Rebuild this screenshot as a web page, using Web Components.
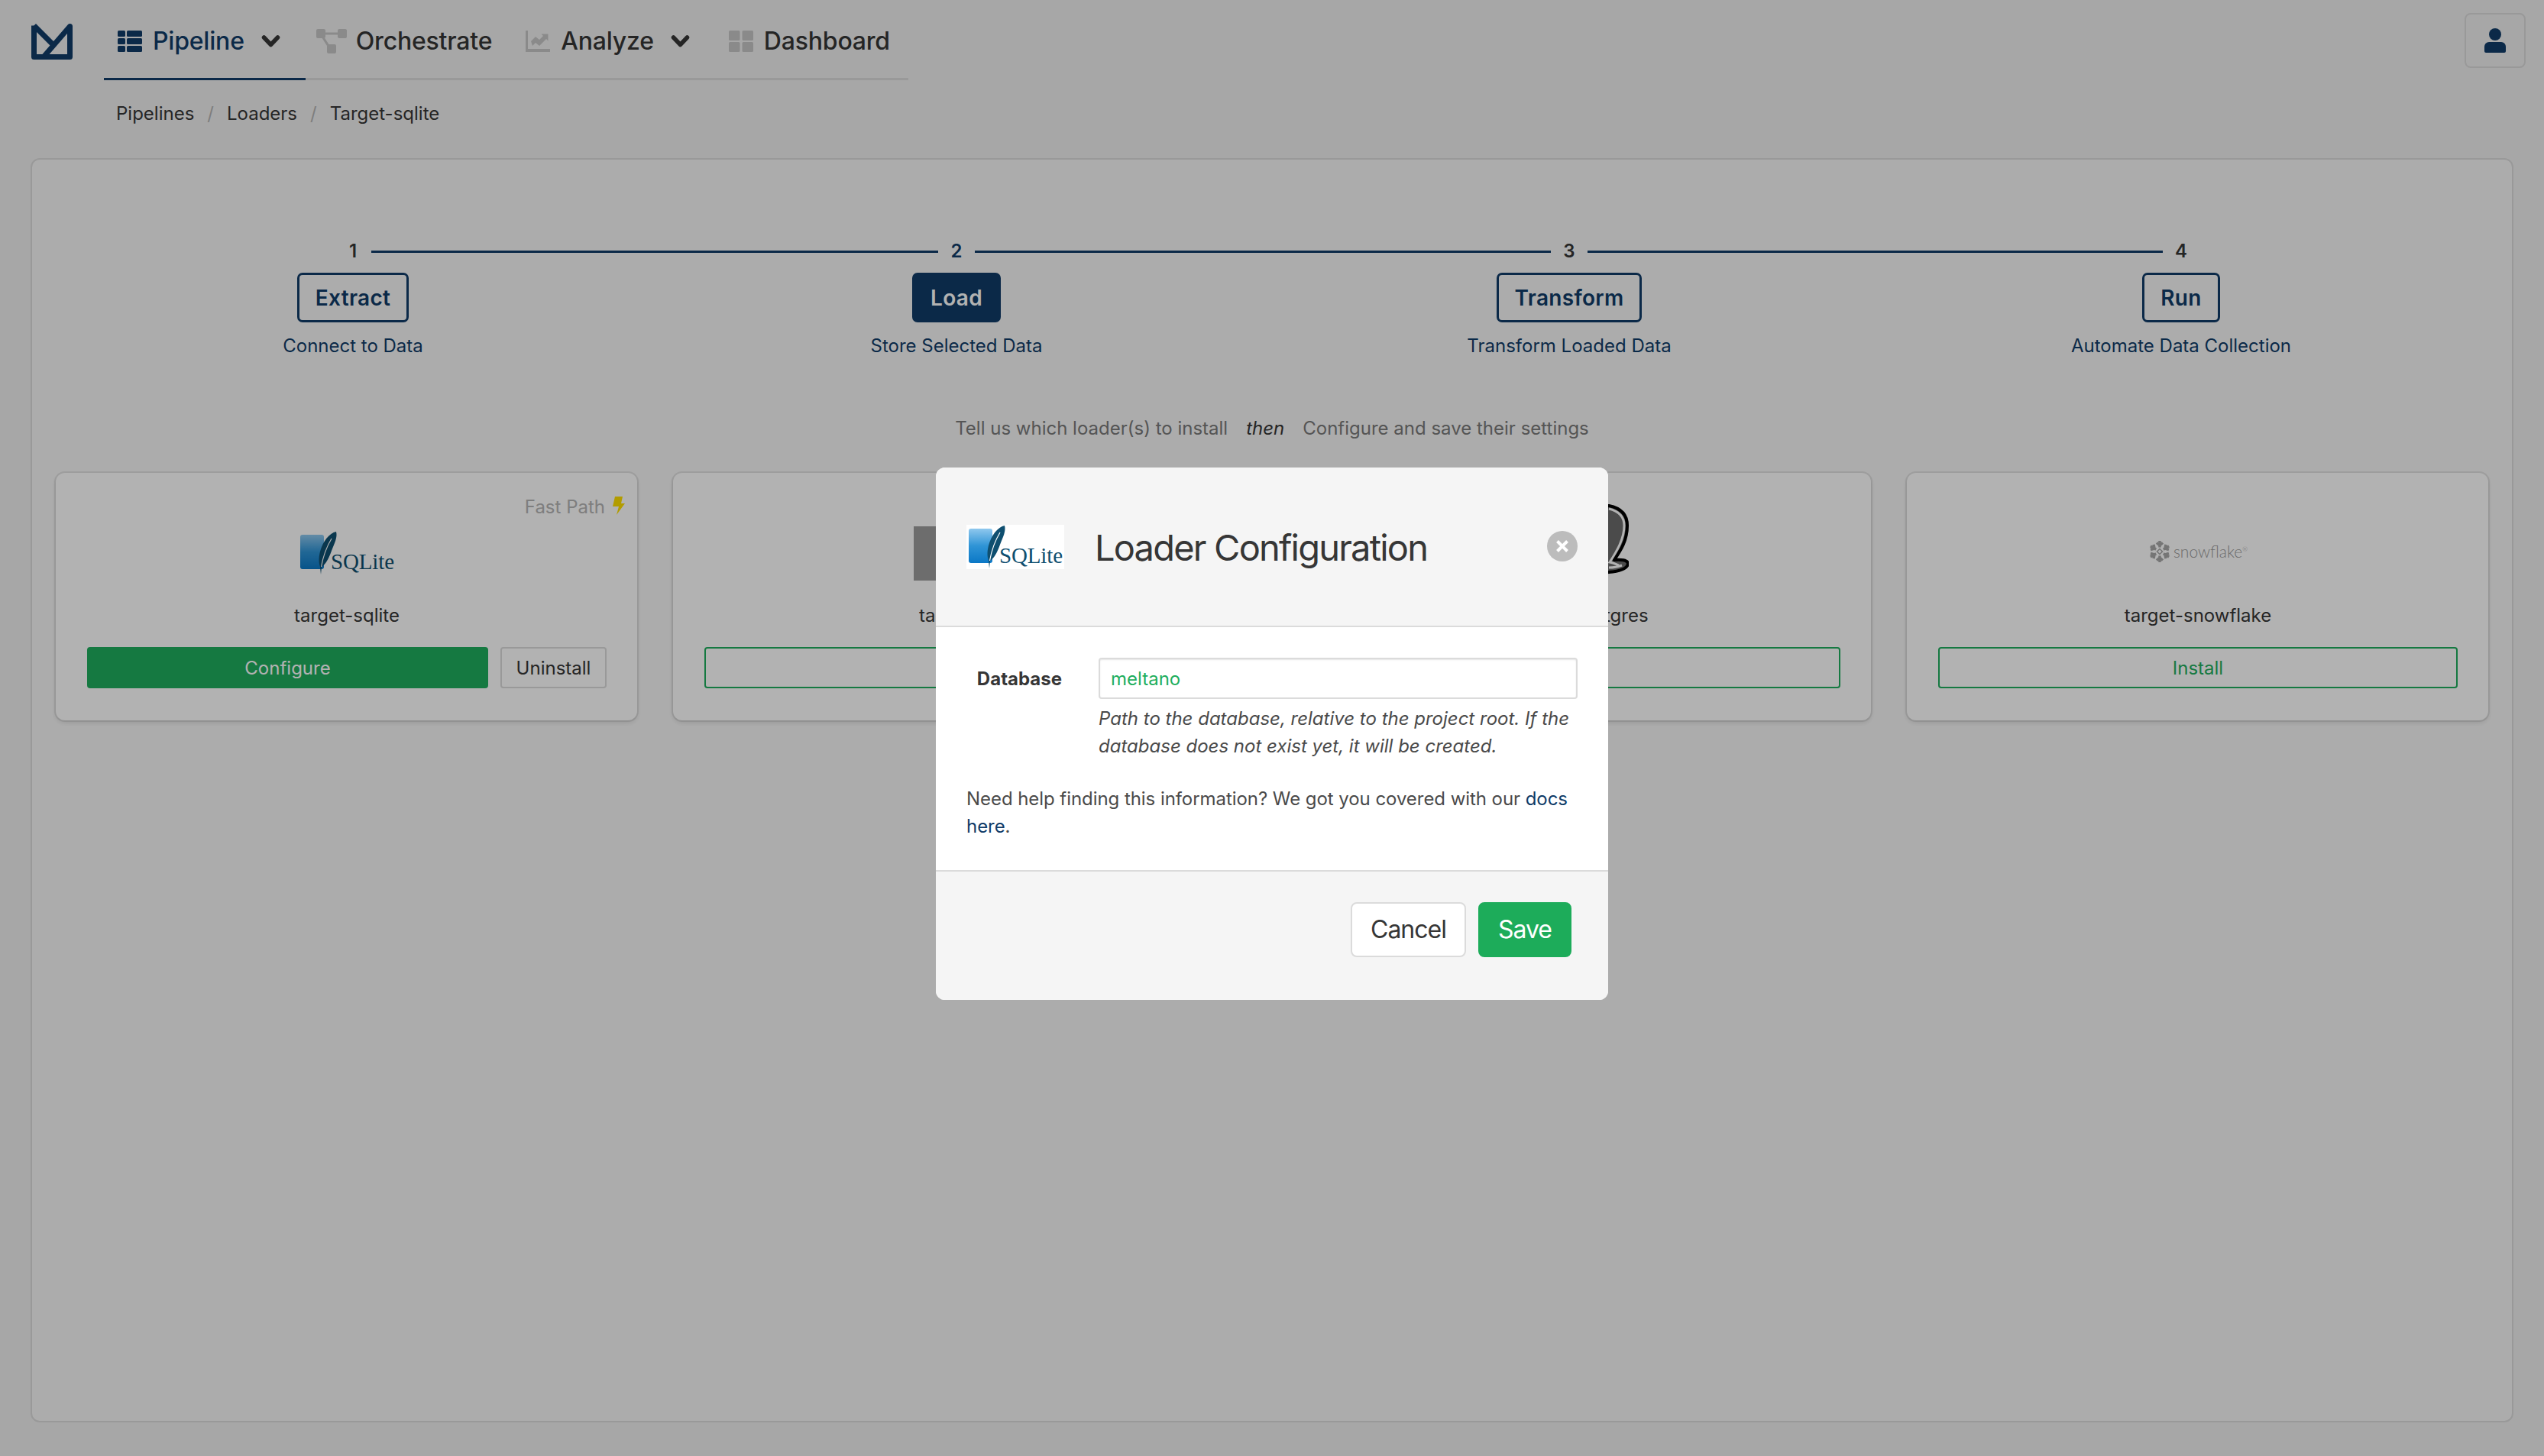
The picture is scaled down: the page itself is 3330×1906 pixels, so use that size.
<!DOCTYPE html>
<html lang="en">
<head>
<meta charset="utf-8">
<title>Loader Configuration</title>
<style>
  html, body { margin: 0; height: 100%; }
  body {
    background: #f0f0f0;
    color: #363636;
    font-family: Inter, "Liberation Sans", sans-serif;
    font-size: 24px;
    line-height: 36px;
  }
</style>
</head>
<body>
<app-nav>
  <nav-tab active pl="18" pr="33" label="Pipeline" caret>
    <svg viewBox="0 0 32 28" width="32" height="28" fill="currentColor"><rect width="10" height="8" rx="1.5"/><rect x="12" width="20" height="8" rx="1.5"/><rect y="10" width="10" height="8" rx="1.5"/><rect x="12" y="10" width="20" height="8" rx="1.5"/><rect y="20" width="10" height="8" rx="1.5"/><rect x="12" y="20" width="20" height="8" rx="1.5"/></svg>
  </nav-tab>
  <nav-tab pl="14" pr="23" label="Orchestrate" tight>
    <svg viewBox="0 0 40 32" width="40" height="32" fill="currentColor"><rect width="12" height="12" rx="2"/><rect x="28" width="12" height="12" rx="2"/><rect x="14" y="20" width="12" height="12" rx="2"/><path d="M11 4.5h18v3H11zM7 11l3-1 7 11-3 1z"/></svg>
  </nav-tab>
  <nav-tab pl="21" pr="25" label="Analyze" caret>
    <svg viewBox="0 0 32 28" width="32" height="28" fill="currentColor"><path d="M0 0h3v24h29v4H0z"/><path d="M7 15l6-6 5 4 5-5-2.500-2.500h9v9L27 12l-9 9-5-4-4 4z" transform="translate(0 -1)"/></svg>
  </nav-tab>
  <nav-tab pl="26" pr="24" label="Dashboard">
    <svg viewBox="0 0 32 28" width="32" height="28" fill="currentColor"><rect width="14.500" height="13" rx="1.500"/><rect x="17.500" width="14.500" height="13" rx="1.500"/><rect y="15" width="14.500" height="13" rx="1.500"/><rect x="17.500" y="15" width="14.500" height="13" rx="1.500"/></svg>
  </nav-tab>
</app-nav>

<bread-crumbs>
  <span>Pipelines</span>
  <span>Loaders</span>
  <span>Target-sqlite</span>
</bread-crumbs>

<main-panel>
  <step-bar>
    <step-item num="1" name="Extract" first>Connect to Data</step-item>
    <step-item num="2" name="Load" active>Store Selected Data</step-item>
    <step-item num="3" name="Transform">Transform Loaded Data</step-item>
    <step-item num="4" name="Run" last>Automate Data Collection</step-item>
  </step-bar>
  <step-hint></step-hint>
  <card-grid>
    <plugin-card name="target-sqlite" installed fast><sqlite-logo></sqlite-logo></plugin-card>
    <plugin-card name="target-csv"><csv-logo></csv-logo></plugin-card>
    <plugin-card name="target-postgres"><postgres-logo></postgres-logo></plugin-card>
    <plugin-card name="target-snowflake"><snowflake-logo></snowflake-logo></plugin-card>
  </card-grid>
</main-panel>

<config-modal></config-modal>

<script>
class AppNav extends HTMLElement {
  constructor() {
    super();
    this.attachShadow({ mode: "open" });
    this.shadowRoot.innerHTML = `
      <style>
        :host { display: flex; height: 105px; padding-left: 41px; position: relative; }
        .logo { width: 54px; height: 48px; margin-top: 30px; margin-right: 41px; flex: none; }
        .tabs { display: flex; height: 105px; box-sizing: border-box; border-bottom: 3px solid #dbdbdb; }
        button {
          position: absolute; top: 17px; right: 24px; width: 80px; height: 72px;
          box-sizing: border-box; background: #f0f0f0; border: 2px solid #dbdbdb; border-radius: 8px;
          display: flex; align-items: center; justify-content: center; padding: 0; color: #103c68;
        }
      </style>
      <svg class="logo" viewBox="0 0 54 48" fill="none" stroke="#103c68" stroke-width="7" stroke-linejoin="round">
        <path d="M3.500 3.500 V44.500 H50.500 V4.500 L16 44.500"/>
        <path d="M3.500 3.500 L29 29"/>
      </svg>
      <div class="tabs"><slot></slot></div>
      <button aria-label="Account">
        <svg viewBox="0 0 28 32" width="28" height="32" fill="currentColor"><circle cx="14" cy="8" r="8"/><path d="M6 18h16a6 6 0 0 1 6 6v6a2 2 0 0 1-2 2H2a2 2 0 0 1-2-2v-6a6 6 0 0 1 6-6z"/></svg>
      </button>
    `;
  }
}
customElements.define("app-nav", AppNav);

class NavTab extends HTMLElement {
  constructor() {
    super();
    this.attachShadow({ mode: "open" });
  }

  connectedCallback() {
    const active = this.hasAttribute("active");
    const caret = this.hasAttribute("caret");
    this.shadowRoot.innerHTML = `
      <style>
        :host {
          display: flex; align-items: center; box-sizing: border-box; height: 105px;
          margin-bottom: -3px; padding: 5px ${this.getAttribute("pr")}px 0 ${this.getAttribute("pl")}px;
          border-bottom: 3px solid ${active ? "#103c68" : "transparent"};
          font-size: 32px; font-weight: 500; letter-spacing: -.2px; color: ${active ? "#103c68" : "#363636"};
        }
        .icon { display: flex; margin-right: ${this.hasAttribute("tight") ? 12 : 14}px; color: ${active ? "#103c68" : "#c6c6c6"}; }
        .caret { margin-left: 22px; }
      </style>
      <span class="icon"><slot></slot></span>
      <span>${this.getAttribute("label")}</span>
      ${caret ? `<svg class="caret" viewBox="0 0 25 18" width="25" height="18" fill="none" stroke="#363636" stroke-width="5.500" stroke-linecap="round" stroke-linejoin="round"><path d="M3.500 4l9 9.500 9-9.500"/></svg>` : ""}
    `;
  }
}
customElements.define("nav-tab", NavTab);

class BreadCrumbs extends HTMLElement {
  constructor() {
    super();
    this.attachShadow({ mode: "open" });
    this.shadowRoot.innerHTML = `
      <style>
        :host { display: block; padding: 26px 0 40px 152px; height: 36px; font-size: 24px; line-height: 36px; color: #363636; }
        .row { display: flex; }
        ::slotted(span:not(:last-child))::after { content: "/"; color: #b5b5b5; margin: 0 17px; }
      </style>
      <div class="row"><slot></slot></div>
    `;
  }
}
customElements.define("bread-crumbs", BreadCrumbs);

class MainPanel extends HTMLElement {
  constructor() {
    super();
    this.attachShadow({ mode: "open" });
    this.shadowRoot.innerHTML = `
      <style>
        :host {
          display: block; box-sizing: border-box; margin: 0 40px; height: 1655px;
          padding: 102px 31px 0; background: #f7f7f7; border: 2px solid #dbdbdb; border-radius: 12px;
        }
      </style>
      <slot></slot>
    `;
  }
}
customElements.define("main-panel", MainPanel);

class StepBar extends HTMLElement {
  constructor() {
    super();
    this.attachShadow({ mode: "open" });
    this.shadowRoot.innerHTML = `
      <style>
        :host { display: grid; grid-template-columns: 778px 802px 802px 800px; }
      </style>
      <slot></slot>
    `;
  }
}
customElements.define("step-bar", StepBar);

class StepItem extends HTMLElement {
  constructor() {
    super();
    this.attachShadow({ mode: "open" });
  }

  connectedCallback() {
    const active = this.hasAttribute("active");
    this.shadowRoot.innerHTML = `
      <style>
        :host { display: flex; flex-direction: column; align-items: center; font-size: 24px; line-height: 36px; color: #103c68; }
        .top { display: flex; align-items: center; align-self: stretch; height: 36px; }
        .line { flex: 1; height: 3px; background: #103c68; }
        .line.off { background: transparent; }
        .num { width: 48px; text-align: center; font-weight: 600; color: ${active ? "#103c68" : "#363636"}; }
        .btn {
          box-sizing: border-box; height: 65px; margin-top: 10px; padding: 0 21px;
          display: flex; align-items: center;
          border: 3px solid #103c68; border-radius: 7px; font-size: 28px; font-weight: 600; letter-spacing: .3px;
          background: ${active ? "#103c68" : "transparent"}; color: ${active ? "#fff" : "#103c68"};
        }
        .sub { margin-top: 13px; }
      </style>
      <div class="top">
        <span class="line ${this.hasAttribute("first") ? "off" : ""}"></span>
        <span class="num">${this.getAttribute("num")}</span>
        <span class="line ${this.hasAttribute("last") ? "off" : ""}"></span>
      </div>
      <div class="btn">${this.getAttribute("name")}</div>
      <div class="sub"><slot></slot></div>
    `;
  }
}
customElements.define("step-item", StepItem);

class StepHint extends HTMLElement {
  constructor() {
    super();
    this.attachShadow({ mode: "open" });
    this.shadowRoot.innerHTML = `
      <style>
        :host { display: flex; justify-content: center; gap: 24px; margin-top: 72px; font-size: 24px; line-height: 36px; color: #7a7a7a; }
        em { color: #363636; }
      </style>
      <span>Tell us which loader(s) to install</span>
      <em>then</em>
      <span>Configure and save their settings</span>
    `;
  }
}
customElements.define("step-hint", StepHint);

class CardGrid extends HTMLElement {
  constructor() {
    super();
    this.attachShadow({ mode: "open" });
    this.shadowRoot.innerHTML = `
      <style>
        :host { display: grid; grid-template-columns: repeat(4, 1fr); gap: 46.670px; margin-top: 40px; }
      </style>
      <slot></slot>
    `;
  }
}
customElements.define("card-grid", CardGrid);

class PluginCard extends HTMLElement {
  constructor() {
    super();
    this.attachShadow({ mode: "open" });
  }

  connectedCallback() {
    const installed = this.hasAttribute("installed");
    this.shadowRoot.innerHTML = `
      <style>
        :host {
          display: flex; flex-direction: column; box-sizing: border-box; height: 324px; padding: 41px 40px 41px 41px;
          position: relative; background: #fff; border-radius: 12px;
          box-shadow: 0 3px 6px rgba(10,10,10,.12), 0 0 0 2px rgba(10,10,10,.08);
          font-size: 24px; line-height: 36px;
        }
        .fast { position: absolute; top: 27px; right: 16px; display: flex; align-items: center; gap: 10px; color: #b5b5b5; }
        .fast svg { margin-top: -4px; }
        .logo { height: 128px; display: flex; align-items: center; justify-content: center; }
        .name { text-align: center; margin-bottom: 23px; }
        .actions { display: flex; gap: 16px; }
        .btn {
          box-sizing: border-box; height: 54px; padding-top: 2px; display: flex; align-items: center; justify-content: center;
          border-radius: 4px; border: 2px solid #1fae5e; color: #1fae5e; flex: 1;
        }
        .btn.fill { background: #1fae5e; color: #fff; }
        .btn.plain { flex: none; width: 139px; border-color: #dbdbdb; color: #363636; }
      </style>
      ${this.hasAttribute("fast") ? `<div class="fast">Fast Path <svg viewBox="0 0 16 24" width="16" height="24" fill="#ffe000"><path d="M3 0h10l-2 9h5L5 24l3-11H0z"/></svg></div>` : ""}
      <div class="logo"><slot></slot></div>
      <div class="name">${this.getAttribute("name")}</div>
      <div class="actions">
        ${installed
          ? `<div class="btn fill">Configure</div><div class="btn plain">Uninstall</div>`
          : `<div class="btn">Install</div>`}
      </div>
    `;
  }
}
customElements.define("plugin-card", PluginCard);

class SqliteLogo extends HTMLElement {
  constructor() {
    super();
    this.attachShadow({ mode: "open" });
    this.shadowRoot.innerHTML = `
      <style>
        :host { display: block; width: 128px; height: 58px; line-height: 0; }
        :host([boxed]) { background: #fff; }
        text { font-family: "Liberation Serif", serif; font-size: 29px; fill: #0f4f70; }
      </style>
      <svg viewBox="0 0 128 58" width="128" height="58">
        <defs>
          <linearGradient id="blue" x1="0" y1="0" x2="0" y2="1">
            <stop offset="0" stop-color="#8fc8ee"/>
            <stop offset=".5" stop-color="#2f94d6"/>
            <stop offset="1" stop-color="#0b78c6"/>
          </linearGradient>
        </defs>
        <rect x="3" y="5" width="31" height="45" rx="3" fill="url(#blue)"/>
        <path d="M50 1C41 3 33 13 29 27c-2 8-2 14 0 20l1 10 1-10c5-3 9-10 13-21C48 16 52 8 50 1z" fill="#0f4f70"/>
        <path d="M44 10C38 20 33 33 30.500 47" fill="none" stroke="#fff" stroke-width="1.200"/>
        <text x="43" y="50" textLength="83">SQLite</text>
      </svg>
    `;
  }
}
customElements.define("sqlite-logo", SqliteLogo);

class CsvLogo extends HTMLElement {
  constructor() {
    super();
    this.attachShadow({ mode: "open" });
    this.shadowRoot.innerHTML = `
      <style>
        :host { display: block; width: 132px; height: 71px; background: #9d9d9d; }
      </style>
    `;
  }
}
customElements.define("csv-logo", CsvLogo);

class PostgresLogo extends HTMLElement {
  constructor() {
    super();
    this.attachShadow({ mode: "open" });
    this.shadowRoot.innerHTML = `
      <style>
        :host { display: block; width: 126px; height: 128px; line-height: 0; }
      </style>
      <svg viewBox="0 0 126 128" width="126" height="128">
        <path d="M100 2C115 5 124 13 124 28c0 20-9 33-17 45 8-1 18 0 18 5-1 7-14 10-25 11-12 1-70 8-85-30C5 30 25 2 100 2z"
          fill="#6c6c6c" stroke="#000" stroke-width="4" stroke-linejoin="round"/>
        <path d="M100 6c12 3 20 10 20 22 0 18-10 34-19 48 6 1 9 3 12 4M100 83c6 0 12-1 17-3"
          fill="none" stroke="#fff" stroke-width="3"/>
      </svg>
    `;
  }
}
customElements.define("postgres-logo", PostgresLogo);

class SnowflakeLogo extends HTMLElement {
  constructor() {
    super();
    this.attachShadow({ mode: "open" });
    const arm = [0, 60, 120, 180, 240, 300]
      .map((a) => `<path transform="rotate(${a} 15 15)" d="M15 9.500V1M15 7l-4-3.500M15 7l4-3.500"/>`)
      .join("");
    this.shadowRoot.innerHTML = `
      <style>
        :host { display: flex; align-items: center; gap: 3px; margin-top: -4px; color: #9a9a9a; font-family: Lato, Inter, sans-serif; font-size: 21px; font-weight: 300; line-height: 30px; }
        sup { font-size: 8px; line-height: 0; vertical-align: 8px; }
      </style>
      <svg viewBox="0 0 30 30" width="30" height="30" fill="none" stroke="#a8a8a8" stroke-width="3.500">${arm}<rect x="12.500" y="12.500" width="5" height="5" transform="rotate(45 15 15)" stroke-width="1.500"/></svg>
      <span>snowflake<sup>®</sup></span>
    `;
  }
}
customElements.define("snowflake-logo", SnowflakeLogo);

class ConfigModal extends HTMLElement {
  constructor() {
    super();
    this.attachShadow({ mode: "open" });
    this.shadowRoot.innerHTML = `
      <style>
        :host {
          position: fixed; inset: 0; display: flex; justify-content: center; align-items: flex-start;
          background: rgba(0,0,0,.3); font-size: 24px; line-height: 36px; color: #4a4a4a;
        }
        .card { width: 880px; margin-top: 612px; border-radius: 12px; overflow: hidden; background: #fff; }
        header {
          display: flex; align-items: center; box-sizing: border-box; height: 209px; padding: 0 40px;
          background: #f5f5f5; border-bottom: 2px solid #dbdbdb;
        }
        sqlite-logo { flex: none; margin-right: 40px; }
        h2 { flex: 1; margin: 2px 0 0; font-size: 47px; line-height: 60px; font-weight: 400; letter-spacing: -1.8px; color: #363636; }
        .close { width: 40px; height: 40px; flex: none; margin-top: -2px; }
        section { padding: 40px 40px 39px; }
        .field { display: flex; gap: 48px; }
        label { width: 125px; flex: none; text-align: right; line-height: 56px; font-weight: 700; color: #363636; }
        .control { flex: 1; }
        .input {
          box-sizing: border-box; height: 54px; padding: 1px 14px 0; display: flex; align-items: center;
          background: #fff; border: 2px solid #dbdbdb; border-radius: 4px;
          box-shadow: inset 0 1px 2px rgba(10,10,10,.1); color: #1fae5e;
        }
        .help { margin: 8px 0 0; font-style: italic; }
        .need { margin: 33px 0 0; letter-spacing: -.06px; }
        a { color: #103c68; text-decoration: none; }
        footer {
          display: flex; justify-content: flex-end; gap: 16px; padding: 40px 48px 56px;
          background: #f5f5f5; border-top: 2px solid #dbdbdb;
        }
        .btn {
          box-sizing: border-box; height: 72px; padding: 0 24px; display: flex; align-items: center;
          border: 2px solid #dbdbdb; border-radius: 8px; background: #fff; font-size: 32px; letter-spacing: -1px; color: #363636;
        }
        .btn.save { background: #1dac5a; border-color: #1dac5a; color: #fff; }
      </style>
      <div class="card">
        <header>
          <sqlite-logo boxed></sqlite-logo>
          <h2>Loader Configuration</h2>
          <svg class="close" viewBox="0 0 40 40">
            <circle cx="20" cy="20" r="20" fill="#bcbcbc"/>
            <path d="M13.500 13.500l13 13M26.500 13.500l-13 13" stroke="#fff" stroke-width="4"/>
          </svg>
        </header>
        <section>
          <div class="field">
            <label>Database</label>
            <div class="control">
              <div class="input">meltano</div>
              <p class="help">Path to the database, relative to the project root. If the database does not exist yet, it will be created.</p>
            </div>
          </div>
          <p class="need">Need help finding this information? We got you covered with our <a href="#">docs here</a>.</p>
        </section>
        <footer>
          <div class="btn">Cancel</div>
          <div class="btn save">Save</div>
        </footer>
      </div>
    `;
  }
}
customElements.define("config-modal", ConfigModal);
</script>
</body>
</html>
